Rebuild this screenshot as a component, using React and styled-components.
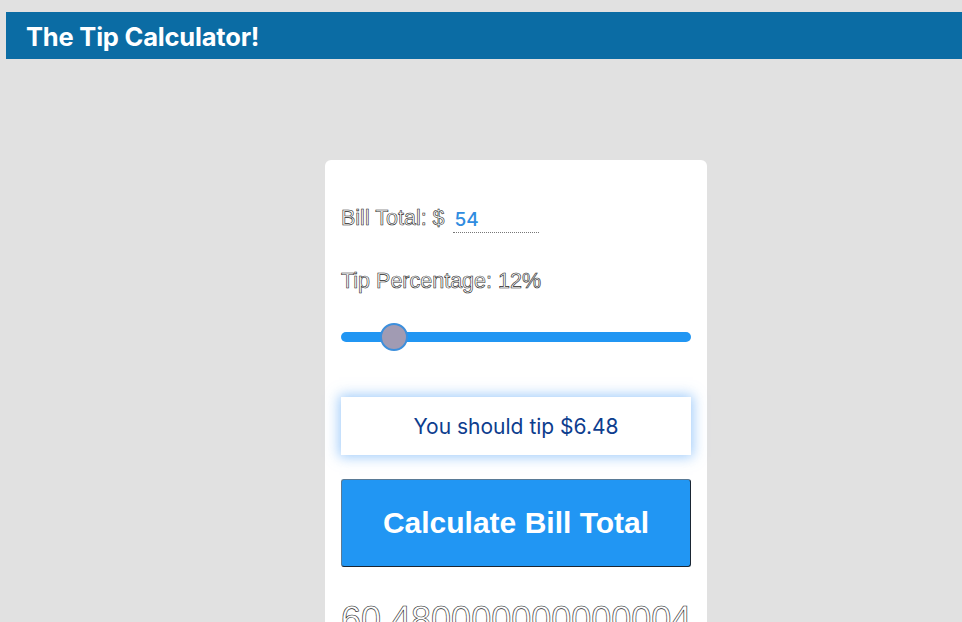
import styled, { createGlobalStyle } from 'styled-components';
import { useState } from 'react';

const GlobalStyle = createGlobalStyle`
    html, body {
        margin: 0;
        padding: 0;
        background-color: #e1e1e1;
        height: 100%;
        overflow: hidden;
    }
`

const Page = styled.div`
    padding-top: 12px;
    font-family: "Liberation Sans", Arial, sans-serif;
`

const Header = styled.div`
    margin-left: 6px;
    height: 47px;
    background-color: #0b6ca4;
    display: flex;
    align-items: center;
    padding-left: 20px;
`

const Title = styled.h1`
    margin: 0;
    font-family: Inter, "Liberation Sans", sans-serif;
    font-size: 25.5px;
    font-weight: 700;
    color: #ffffff;
    letter-spacing: -0.2px;
    padding-top: 2px;
`

const Card = styled.div`
    margin: 101px 0 0 325px;
    width: 350px;
    height: 500px;
    background-color: #ffffff;
    border-radius: 6px;
    padding: 46px 16px 0 16px;
`

const OutlineText = styled.span`
    color: #ffffff;
    -webkit-text-stroke: 0.6px #1e1e1e;
    font-family: "Liberation Sans", Arial, sans-serif;
`

const Row = styled.div`
    display: flex;
    align-items: center;
    height: 24px;
    margin-bottom: ${props => props.$gap || 0}px;
`

const Label = styled(OutlineText)`
    font-size: 21.5px;
    white-space: pre;
`

const BillInput = styled.input`
    width: 84px;
    margin-left: 8px;
    padding: 0 0 0 2px;
    border: none;
    border-bottom: 1px dotted #777;
    outline: none;
    font-family: Inter, "Liberation Sans", sans-serif;
    font-size: 19px;
    font-weight: 500;
    color: #2f8ce0;
    background: transparent;
    height: 25px;
    margin-top: 4px;
`

const Slider = styled.input`
    -webkit-appearance: none;
    appearance: none;
    display: block;
    width: 350px;
    height: 28px;
    margin: 30px 0 0 0;
    background: transparent;

    &::-webkit-slider-runnable-track {
        height: 10px;
        background-color: #2196f3;
        border-radius: 5px;
    }

    &::-webkit-slider-thumb {
        -webkit-appearance: none;
        width: 28px;
        height: 28px;
        border-radius: 50%;
        background-color: #a19bb3;
        border: 2px solid #3d8fdc;
        box-sizing: border-box;
        margin-top: -9px;
    }
`

const ResultBox = styled.div`
    margin-top: 46px;
    height: 58px;
    background-color: #ffffff;
    box-shadow: 0 0 12px 2px rgba(80, 160, 245, 0.55);
    display: flex;
    align-items: center;
    justify-content: center;
    font-family: Inter, "Liberation Sans", sans-serif;
    font-size: 21px;
    color: #0d3d8e;
`

const CalcButton = styled.button`
    margin-top: 24px;
    width: 350px;
    height: 88px;
    background-color: #2196f3;
    border: 1px solid;
    border-color: #5a7a96 #1b2633 #1b2633 #5a7a96;
    border-radius: 3px;
    color: #ffffff;
    font-family: "Liberation Sans", Arial, sans-serif;
    font-weight: 700;
    font-size: 30px;
    cursor: pointer;
`

const Total = styled(OutlineText)`
    display: block;
    margin-top: 33px;
    font-size: 36px;
    line-height: 40px;
    white-space: nowrap;
`

const App = () => {
    const [bill, setBill] = useState('54');
    const [tip, setTip] = useState(12);
    const tipAmount = (parseFloat(bill) || 0) * tip / 100;

    return (
        <Page>
            <GlobalStyle />
            <Header>
                <Title>The Tip Calculator!</Title>
            </Header>
            <Card>
                <Row $gap={39}>
                    <Label>Bill Total: $</Label>
                    <BillInput value={bill} onChange={e => setBill(e.target.value)} />
                </Row>
                <Row>
                    <Label>Tip Percentage: {tip}%</Label>
                </Row>
                <Slider
                    type="range"
                    min="0"
                    max="100"
                    value={tip}
                    onChange={e => setTip(Number(e.target.value))}
                />
                <ResultBox>You should tip ${tipAmount.toFixed(2)}</ResultBox>
                <CalcButton>Calculate Bill Total</CalcButton>
                <Total>60.480000000000004</Total>
            </Card>
        </Page>
    )
}

export default App
